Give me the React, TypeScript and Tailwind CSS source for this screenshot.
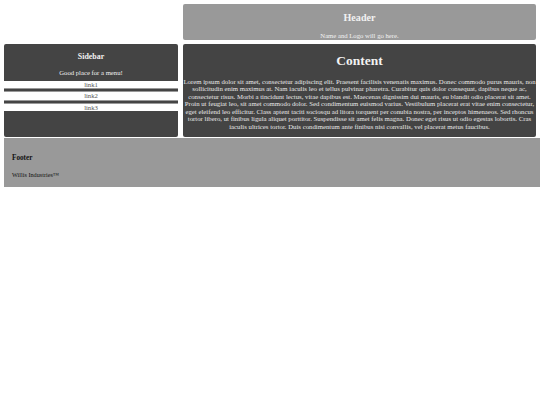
export default function App() {
  const lorem =
    'Lorem ipsum dolor sit amet, consectetur adipiscing elit. Praesent facilisis venenatis maximus. Donec commodo purus mauris, non sollicitudin enim maximus at. Nam iaculis leo et tellus pulvinar pharetra. Curabitur quis dolor consequat, dapibus neque ac, consectetur risus. Morbi a tincidunt lectus, vitae dapibus est. Maecenas dignissim dui mauris, eu blandit odio placerat sit amet. Proin ut feugiat leo, sit amet commodo dolor. Sed condimentum euismod varius. Vestibulum placerat erat vitae enim consectetur, eget eleifend leo efficitur. Class aptent taciti sociosqu ad litora torquent per conubia nostra, per inceptos himenaeos. Sed rhoncus tortor libero, ut finibus ligula aliquet porttitor. Suspendisse sit amet felis magna. Donec eget risus ut odio egestas lobortis. Cras iaculis ultrices tortor. Duis condimentum ante finibus nisi convallis, vel placerat metus faucibus.';
  const links = ['link1', 'link2', 'link3'];

  return (
    <div className="min-h-[405px] w-[540px] overflow-hidden bg-white pl-[4px] pt-[4px] font-['Liberation_Serif',serif]">
      <div className="grid grid-cols-[174px_353px] grid-rows-[36px_93px] gap-x-[5px] gap-y-[4px]">
        {/* Header */}
        <div className="col-start-2 flex flex-col items-center overflow-hidden rounded-[2px] bg-[#999999] text-[#f2f2f2]">
          <h2 className="mt-[8px] text-[10.1px] font-bold leading-[11.6px]">Header</h2>
          <p className="mt-[8.4px] text-[6.7px] leading-[7.7px]">Name and Logo will go here.</p>
        </div>

        {/* Sidebar */}
        <div className="col-start-1 flex flex-col overflow-hidden rounded-[2px] bg-[#444444] text-[#f2f2f2]">
          <h3 className="mt-[8px] text-center text-[7.9px] font-bold leading-[9px]">Sidebar</h3>
          <p className="mt-[7.8px] text-center text-[6.7px] leading-[7.6px]">Good place for a menu!</p>
          <div className="mt-[4.6px] flex flex-col">
            {links.map((l, i) => (
              <div key={l}>
                {i > 0 && <div className="h-[4px] border-y border-[#999999] bg-[#444444]" />}
                <div className="h-[7.3px] bg-white text-center text-[6.7px] leading-[7.3px] text-[#555555]">{l}</div>
              </div>
            ))}
          </div>
        </div>

        {/* Content */}
        <div className="flex flex-col overflow-hidden rounded-[2px] bg-[#444444] text-[#f2f2f2]">
          <h1 className="mt-[9px] text-center text-[13.5px] font-bold leading-[15.5px]">Content</h1>
          <p className="mt-[9px] text-center text-[6.78px] leading-[7.55px] text-[#e8e8e8]">{lorem}</p>
        </div>
      </div>

      {/* Footer */}
      <div className="mt-[1px] h-[49px] w-[540px] bg-[#999999] pl-[8px] pt-[16px] text-[#111111]">
        <h4 className="text-[7.2px] font-bold leading-[8px]">Footer</h4>
        <p className="mt-[9px] text-[6.2px] leading-[7px]">Willis Industries™</p>
      </div>
    </div>
  );
}
